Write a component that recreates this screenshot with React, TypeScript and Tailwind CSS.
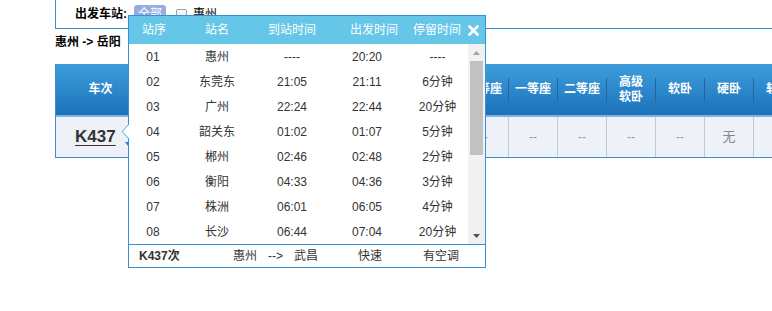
import React from "react";

type Col = { w: string; head: string[]; val: string };

const COLS: Col[] = [
  { w: "w-[90px]", head: ["车次"], val: "" },
  { w: "w-[90px]", head: ["出发站", "到达站"], val: "" },
  { w: "w-[90px]", head: ["出发时间", "到达时间"], val: "" },
  { w: "w-[85px]", head: ["历时"], val: "" },
  { w: "w-[49px]", head: ["商务座"], val: "--" },
  { w: "w-[49px]", head: ["特等座"], val: "--" },
  { w: "w-[49px]", head: ["一等座"], val: "--" },
  { w: "w-[49px]", head: ["二等座"], val: "--" },
  { w: "w-[49px]", head: ["高级", "软卧"], val: "--" },
  { w: "w-[49px]", head: ["软卧"], val: "--" },
  { w: "w-[49px]", head: ["硬卧"], val: "无" },
  { w: "w-[49px]", head: ["软座"], val: "--" },
];

const STOPS = [
  ["01", "惠州", "----", "20:20", "----"],
  ["02", "东莞东", "21:05", "21:11", "6分钟"],
  ["03", "广州", "22:24", "22:44", "20分钟"],
  ["04", "韶关东", "01:02", "01:07", "5分钟"],
  ["05", "郴州", "02:46", "02:48", "2分钟"],
  ["06", "衡阳", "04:33", "04:36", "3分钟"],
  ["07", "株洲", "06:01", "06:05", "4分钟"],
  ["08", "长沙", "06:44", "07:04", "20分钟"],
];

const BODY_W = ["w-[48px]", "w-[80px]", "w-[70px]", "w-[80px]", "w-[61px]"];

export default function App() {
  return (
    <div className="relative w-[772px] h-[311px] overflow-hidden bg-white text-[12px] text-[#333] font-['Liberation_Sans','Noto_Sans_CJK_SC',sans-serif]">
      {/* 出发车站筛选 */}
      <div className="ml-[55px] h-[29px] border-l border-b border-[#3a8fd0] flex items-center pl-[19px]">
        <span className="font-bold text-black">出发车站:</span>
        <span className="ml-[7px] h-[18px] w-[32px] rounded-[3px] bg-[#97ade0] text-white flex items-center justify-center">全部</span>
        <span className="ml-[10px] w-[11px] h-[11px] rounded-[2px] border border-[#a0a0a0] bg-linear-to-b from-white to-[#e4e4e4]"></span>
        <span className="ml-[6px] text-black">惠州</span>
      </div>

      <div className="ml-[55px] mt-[5px] leading-[16px] font-bold text-black">惠州 -&gt; 岳阳</div>

      {/* 车次表 */}
      <div className="ml-[55px] mt-[14px] border-l border-[#3a8fd0] w-[760px]">
        <div className="flex h-[51px] bg-linear-to-b from-[#3d9edc] to-[#1c72ba]">
          {COLS.map((c, i) => (
            <div key={i} className={`${c.w} shrink-0 flex items-center`}>
              <div className="flex-1 flex flex-col items-center justify-center text-white font-bold leading-[15px] whitespace-nowrap">
                {c.head.map((h) => (
                  <span key={h}>{h}</span>
                ))}
              </div>
              <div className="w-px h-[24px] bg-[#2e5f9e]"></div>
            </div>
          ))}
        </div>
        <div className="h-[2px] bg-[#7fb3de]"></div>
        <div className="flex h-[41px] bg-[#eef1f8] border-b border-[#3a8fd0]">
          {COLS.map((c, i) =>
            i === 0 ? (
              <div key={i} className={`${c.w} shrink-0 flex items-center pl-[19px] border-r border-[#b5cde0]`}>
                <span className="text-[17px] font-bold underline underline-offset-[3px] text-[#333]">K437</span>
                <svg className="ml-[9px] mt-[14px]" width="6" height="4" viewBox="0 0 6 4">
                  <path d="M0 0 L6 0 L3 4 Z" fill="#2a7fd0" />
                </svg>
              </div>
            ) : (
              <div key={i} className={`${c.w} shrink-0 flex items-center justify-center border-r border-[#b5cde0] ${c.val === "无" ? "text-[13px] text-[#888]" : "text-[#999]"}`}>
                {c.val}
              </div>
            )
          )}
        </div>
      </div>

      {/* 经停站弹层 */}
      <div className="absolute left-[128px] top-[15px] w-[358px] border border-[#3a90d2] bg-white">
        <div className="h-[28px] bg-[#66c6e8] flex items-center text-white whitespace-nowrap">
          <div className="w-[50px] flex justify-center">站序</div>
          <div className="w-[76px] flex justify-center">站名</div>
          <div className="w-[74px] flex justify-center">到站时间</div>
          <div className="w-[90px] flex justify-center">出发时间</div>
          <div className="w-[36px] flex justify-center">停留时间</div>
          <div className="flex-1 pl-[13px] flex items-center">
            <svg width="11" height="11" viewBox="0 0 11 11">
              <path d="M1.5 1.5 L9.5 9.5 M9.5 1.5 L1.5 9.5" stroke="white" strokeWidth="2.6" strokeLinecap="round" />
            </svg>
          </div>
        </div>

        <div className="flex h-[200px]">
          <div className="w-[339px] overflow-hidden">
            {STOPS.map((r) => (
              <div key={r[0]} className="flex h-[25px] items-center">
                {r.map((v, j) => (
                  <div key={j} className={`${BODY_W[j]} flex justify-center whitespace-nowrap`}>
                    {v}
                  </div>
                ))}
              </div>
            ))}
          </div>
          {/* 滚动条 */}
          <div className="w-[17px] bg-[#f1f1f1] flex flex-col">
            <div className="h-[17px] flex items-center justify-center">
              <svg width="7" height="4" viewBox="0 0 7 4">
                <path d="M0 4 L3.5 0 L7 4 Z" fill="#a3a3a3" />
              </svg>
            </div>
            <div className="mx-[2px] h-[94px] bg-[#c1c1c1]"></div>
            <div className="flex-1"></div>
            <div className="h-[17px] flex items-center justify-center">
              <svg width="7" height="4" viewBox="0 0 7 4">
                <path d="M0 0 L7 0 L3.5 4 Z" fill="#505050" />
              </svg>
            </div>
          </div>
        </div>

        <div className="h-[23px] border-t border-[#3a90d2] flex items-center pl-[10px] whitespace-nowrap">
          <span className="w-[94px] font-bold">K437次</span>
          <span className="w-[35px]">惠州</span>
          <span className="w-[26px]">--&gt;</span>
          <span className="w-[64px]">武昌</span>
          <span className="w-[65px]">快速</span>
          <span>有空调</span>
        </div>
      </div>

      {/* 指向车次的箭头 */}
      <svg className="absolute left-[121px] top-[124px]" width="9" height="15" viewBox="0 0 9 15">
        <path d="M8.5 0 L1 7.5 L8.5 15 Z" fill="white" />
        <path d="M7.5 0.5 L1.2 7.5 L7.5 14.5" fill="none" stroke="#45ade2" strokeWidth="1" />
      </svg>
    </div>
  );
}
